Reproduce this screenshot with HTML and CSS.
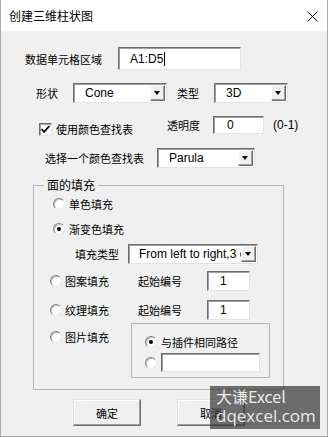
FILE: index.html
```html
<!DOCTYPE html>
<html lang="zh-CN">
<head>
    <meta charset="UTF-8">
    <title>创建三维柱状图</title>
    <link rel="stylesheet" href="styles.css">
</head>
<body>
    <div class="window">
        <div class="titlebar">
            <span class="title">创建三维柱状图</span>
            <svg class="close" width="11" height="11" viewBox="0 0 11 11">
                <path d="M0.5 0.5 L10.5 10.5 M10.5 0.5 L0.5 10.5" stroke="#000" stroke-width="1" fill="none"/>
            </svg>
        </div>

        <div class="content">
            <div class="row row-range">
                <span class="label w-range">数据单元格区域</span>
                <div class="textbox tb-range">A1:D5<span class="caret"></span></div>
            </div>

            <div class="row row-shape">
                <span class="label w-shape">形状</span>
                <div class="combo cb-shape"><span class="combo-text">Cone</span><span class="drop"></span></div>
                <span class="label w-type">类型</span>
                <div class="combo cb-type"><span class="combo-text">3D</span><span class="drop"></span></div>
            </div>

            <div class="row row-alpha">
                <label class="check w-check">
                    <span class="checkbox">
                        <svg width="11" height="11" viewBox="0 0 11 11">
                            <path d="M1.5 5 L4 7.8 L9.5 2" stroke="#000" stroke-width="1.8" fill="none"/>
                        </svg>
                    </span>
                    使用颜色查找表
                </label>
                <span class="label w-alpha">透明度</span>
                <div class="textbox tb-alpha">0</div>
                <span class="hint">(0-1)</span>
            </div>

            <div class="row row-map">
                <span class="label w-map">选择一个颜色查找表</span>
                <div class="combo cb-map"><span class="combo-text">Parula</span><span class="drop"></span></div>
            </div>

            <fieldset class="group">
                <legend>面的填充</legend>

                <div class="opt opt-solid">
                    <span class="radio-label"><span class="radio"></span>单色填充</span>
                </div>
                <div class="opt opt-gradient">
                    <span class="radio-label"><span class="radio checked"></span>渐变色填充</span>
                </div>
                <div class="opt opt-filltype">
                    <span class="label w-filltype">填充类型</span>
                    <div class="combo cb-filltype"><span class="combo-text">From left to right,3 colors</span><span class="drop"></span></div>
                </div>
                <div class="opt opt-pattern">
                    <span class="radio-label w-radio"><span class="radio"></span>图案填充</span>
                    <span class="label w-start">起始编号</span>
                    <div class="textbox tb-start">1</div>
                </div>
                <div class="opt opt-texture">
                    <span class="radio-label w-radio"><span class="radio"></span>纹理填充</span>
                    <span class="label w-start">起始编号</span>
                    <div class="textbox tb-start">1</div>
                </div>
                <div class="opt opt-picture">
                    <span class="radio-label w-radio pic-radio"><span class="radio"></span>图片填充</span>
                    <div class="picture-box">
                        <div class="inner-opt inner-same">
                            <span class="radio-label"><span class="radio checked"></span>与插件相同路径</span>
                        </div>
                        <div class="inner-opt inner-path">
                            <span class="radio"></span>
                            <div class="textbox tb-path"></div>
                        </div>
                    </div>
                </div>
            </fieldset>

            <div class="buttons">
                <div class="btn">确定</div>
                <div class="btn">取消</div>
            </div>
        </div>

        <div class="watermark">
            <div class="wm-name">大谦Excel</div>
            <div class="wm-site">dqexcel.com</div>
        </div>
    </div>
</body>
</html>
```

FILE: styles.css
```css
* {
    box-sizing: border-box;
    margin: 0;
    padding: 0;
}

body {
    width: 328px;
    height: 437px;
    font-family: "Noto Sans CJK SC", sans-serif;
    font-size: 11px;
    color: #000;
    background: #f0f0f0;
    overflow: hidden;
}

.window {
    position: relative;
    width: 328px;
    height: 437px;
    background: #f0f0f0;
    border: 1px solid #a9a9a9;
    border-top: none;
    overflow: hidden;
}

/* Title bar */
.titlebar {
    height: 31px;
    background: #fff;
    display: flex;
    align-items: center;
    justify-content: space-between;
    padding: 0 9px 0 8px;
}

.title {
    font-size: 12px;
    line-height: 16px;
}

.close {
    display: block;
    margin-top: 1px;
}

/* Rows */
.row {
    display: flex;
    align-items: center;
}

.label {
    line-height: 16px;
    white-space: nowrap;
}

.row-range {
    margin-top: 16px;
    height: 23px;
    padding-left: 24px;
}

.w-range { width: 93px; }

.row-shape {
    margin-top: 13px;
    height: 20px;
    padding-left: 35px;
}

.w-shape { width: 37px; }
.w-type { width: 37px; margin-left: 10px; }

.row-alpha {
    margin-top: 13px;
    height: 19px;
    padding-left: 38px;
    align-items: flex-start;
}

.w-check { width: 128px; }
.w-alpha { width: 46px; line-height: 18px; }

.hint {
    font-family: "Liberation Sans", sans-serif;
    font-size: 12px;
    line-height: 18px;
    margin-left: 9px;
}

.row-map {
    margin-top: 13px;
    height: 20px;
    padding-left: 44px;
}

.w-map { width: 112px; }

/* Edit boxes */
.textbox,
.combo {
    background: #fff;
    border: 1px solid;
    border-color: #6d6d6d #e3e3e3 #e3e3e3 #6d6d6d;
    box-shadow: inset 1px 1px 0 #a0a0a0;
    font-family: "Liberation Sans", sans-serif;
    font-size: 12px;
    display: flex;
    align-items: center;
    padding-left: 11px;
    white-space: nowrap;
    overflow: hidden;
}

.tb-range { width: 123px; height: 23px; padding-left: 11px; }
.tb-alpha { width: 51px; height: 18px; padding-left: 13px; }
.tb-start { width: 43px; height: 20px; padding-left: 12px; }
.tb-path { width: 99px; height: 19px; }

.caret {
    width: 1px;
    height: 14px;
    background: #000;
    margin-left: 1px;
}

.combo {
    justify-content: space-between;
    padding-right: 1px;
}

.combo-text {
    overflow: hidden;
    flex: 1;
}

.drop {
    flex: none;
    width: 15px;
    height: calc(100% - 2px);
    background: #f0f0f0;
    border: 1px solid;
    border-color: #fff #6d6d6d #6d6d6d #fff;
    box-shadow: inset -1px -1px 0 #a0a0a0;
    display: flex;
    align-items: center;
    justify-content: center;
}

.drop::after {
    content: '';
    border-left: 3.5px solid transparent;
    border-right: 3.5px solid transparent;
    border-top: 4px solid #000;
    margin-left: -1px;
}

.cb-shape { width: 94px; height: 20px; }
.cb-type { width: 74px; height: 20px; }
.cb-map { width: 98px; height: 20px; }
.cb-filltype { width: 130px; height: 20px; padding-left: 10px; }

/* Check box and radio buttons */
.check {
    display: flex;
    align-items: center;
    gap: 4px;
    align-self: flex-end;
    line-height: 16px;
    margin-bottom: -2px;
}

.checkbox {
    width: 13px;
    height: 13px;
    background: #fff;
    border: 1px solid;
    border-color: #6d6d6d #e3e3e3 #e3e3e3 #6d6d6d;
    box-shadow: inset 1px 1px 0 #a0a0a0;
    display: flex;
    align-items: center;
    justify-content: center;
}

.radio-label {
    display: flex;
    align-items: center;
    gap: 4px;
    line-height: 16px;
    white-space: nowrap;
}

.radio {
    flex: none;
    width: 12px;
    height: 12px;
    border-radius: 50%;
    background: #fff;
    border: 1px solid;
    border-color: #808080 #e6e6e6 #e6e6e6 #808080;
    box-shadow: inset 1px 1px 0 #c4c4c4;
    display: flex;
    align-items: center;
    justify-content: center;
}

.radio.checked::after {
    content: '';
    width: 4px;
    height: 4px;
    border-radius: 50%;
    background: #000;
}

/* Group box */
.group {
    margin: 9px 0 0 32px;
    width: 251px;
    border: 1px solid #b4b4b4;
    padding: 0 0 11px 0;
    min-width: 0;
}

.group legend {
    margin-left: 10px;
    padding: 0 3px;
    font-size: 12px;
    line-height: 16px;
}

.opt {
    display: flex;
    align-items: center;
    height: 20px;
}

.opt-solid { margin-top: 1px; padding-left: 19px; }
.opt-gradient { margin-top: 5px; padding-left: 19px; }
.opt-filltype { margin-top: 5px; padding-left: 41px; }
.opt-pattern { margin-top: 7px; padding-left: 16px; }
.opt-texture { margin-top: 9px; padding-left: 16px; }

.opt-picture {
    margin-top: 3px;
    padding-left: 16px;
    height: auto;
    align-items: flex-start;
}

.w-filltype { width: 53px; }
.w-radio { width: 88px; gap: 3px; }
.w-start { width: 69px; }

.pic-radio {
    width: 81px;
    margin-top: 6px;
}

.picture-box {
    width: 139px;
    height: 55px;
    border: 1px solid #b4b4b4;
    padding-left: 13px;
}

.inner-opt {
    display: flex;
    align-items: center;
}

.inner-same { margin-top: 10px; height: 16px; }
.inner-path { margin-top: 3px; height: 19px; gap: 4px; }

/* Buttons */
.buttons {
    display: flex;
    gap: 36px;
    margin-top: 9px;
    padding-left: 72px;
}

.btn {
    width: 68px;
    height: 27px;
    background: #f0f0f0;
    border: 1px solid;
    border-color: #e3e3e3 #6d6d6d #6d6d6d #e3e3e3;
    box-shadow: inset -1px -1px 0 #a0a0a0, inset 1px 1px 0 #fff;
    display: flex;
    align-items: center;
    justify-content: center;
    line-height: 16px;
}

/* Watermark over the corner */
.watermark {
    position: absolute;
    left: 209px;
    top: 386px;
    width: 110px;
    height: 43px;
    background: rgba(45, 45, 45, 0.68);
    color: rgba(255, 255, 255, 0.88);
    padding: 1px 0 0 6px;
}

.wm-name {
    font-size: 16px;
    line-height: 19px;
}

.wm-site {
    font-family: "Open Sans", sans-serif;
    font-size: 17px;
    line-height: 20px;
}
```
